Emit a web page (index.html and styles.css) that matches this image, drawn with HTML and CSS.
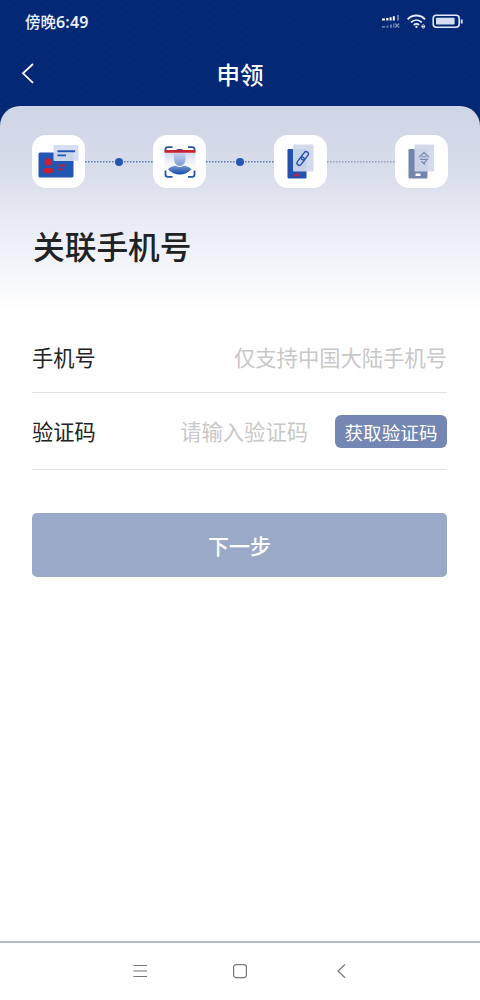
FILE: index.html
```html
<!DOCTYPE html>
<html lang="zh-CN">
<head>
<meta charset="utf-8">
<title>申领</title>
<link rel="stylesheet" href="styles.css">
</head>
<body>
<div class="screen">
  <header class="top">
    <div class="status">
      <span class="time">傍晚<b>6:49</b></span>
      <svg class="status-icons" width="84" height="20" viewBox="0 0 84 20">
        <g fill="#fff">
          <path d="M2 7.600h3v2H2zM6.200 7h2.200v2.600H6.200zM9.600 6.200h2v3.400h-2zM12.800 5.200h2v4.400h-2z"/>
          <path d="M17 4h2v5.600h-2z" opacity=".4"/>
          <path d="M2 15h3v1.800H2zM6.400 14.400h2v2.400h-2zM10 13.600h2v3.200h-2zM13.200 12.600h1.300v4.200h-1.300z" opacity=".4"/>
        </g>
        <path d="M15.200 12.500l4 4M19.200 12.500l-4 4" stroke="#fff" stroke-width="1.200" opacity=".5"/>
        <g fill="none" stroke="#e9eefb" stroke-width="1.900">
          <path d="M27.600 8.300c5-5 12.600-5 17.400 0M31 11.400c3.300-3.100 7.500-3.100 10.800 0M33.800 14c1.600-1.500 3.800-1.500 5.200 0"/>
          <circle cx="36.400" cy="15.900" r="1.100" fill="#e9eefb" stroke="none"/>
          <path d="M41.800 15.400h3c0-2.100-3-2.100-3 0c0 2 2.200 2.200 3 .8" stroke-width="1"/>
        </g>
        <rect x="53.200" y="4.200" width="26" height="12" rx="3.200" fill="none" stroke="#e5eafa" stroke-width="1.600"/>
        <rect x="56" y="6.800" width="18.600" height="6.800" rx=".8" fill="#d6def3"/>
        <path d="M81.700 8.500v4" stroke="#e5eafa" stroke-width="1.800"/>
      </svg>
    </div>
    <div class="nav">
      <svg class="back" width="14" height="22" viewBox="0 0 14 22"><path d="M12 1L2 10.300l10 9.500" fill="none" stroke="#fff" stroke-width="1.800"/></svg>
      <h1>申领</h1>
    </div>
  </header>

  <main class="sheet">
    <div class="steps">
      <div class="tile">
        <svg viewBox="0 0 53 53">
          <rect x="6.500" y="17.500" width="35" height="25" rx="1.500" fill="#2355b2"/>
          <g fill="#cb1f33"><circle cx="16.200" cy="27" r="3.700"/><rect x="11.500" y="33" width="9.500" height="5.300" rx="2.400"/><path d="M25.500 29.500h8v1.900h-8zM25.500 33.400h6v1.900h-6z" opacity=".75"/></g>
          <rect x="21.500" y="10" width="25" height="16" rx="1" fill="#d3dcf0" fill-opacity=".94"/>
          <path d="M25.500 16.300H43M25.500 20.400h8.500" stroke="#2355b2" stroke-width="1.900"/>
        </svg>
      </div>
      <div class="link"><i class="dot"></i></div>
      <div class="tile">
        <svg viewBox="0 0 53 53">
          <defs>
            <linearGradient id="scan" x1="0" y1="0" x2="0" y2="1"><stop offset="0" stop-color="#d8dcf0"/><stop offset="1" stop-color="#fff"/></linearGradient>
            <linearGradient id="head" x1="0" y1="0" x2="0" y2="1"><stop offset="0" stop-color="#c5d2ed"/><stop offset="1" stop-color="#7c9ad2"/></linearGradient>
            <linearGradient id="body" x1="0" y1="0" x2="0" y2="1"><stop offset="0" stop-color="#7796d0"/><stop offset="1" stop-color="#164ba9"/></linearGradient>
          </defs>
          <path d="M11.500 18h31v16h-31z" fill="url(#scan)"/>
          <path d="M15 34.300c2-2.300 5-3.300 8-3.600 2.500 1.600 5 1.600 7.500 0 3 .3 6 1.300 8 3.600-3 3.500-7.500 5.200-11.700 5.200S18 37.800 15 34.300z" fill="url(#body)"/>
          <path d="M21 18h11.500v6c0 4-2.500 7-5.700 7S21 28 21 24z" fill="url(#head)"/>
          <path d="M12.500 16v-1.500c0-1.500.8-2.300 2.300-2.300h4.700M35 12.200h4.200c1.600 0 2.300.8 2.300 2.300V16M12.500 35.500v4c0 1.500.8 2.300 2.300 2.300h4.700M35 41.800h4.200c1.600 0 2.300-.8 2.300-2.300v-4" fill="none" stroke="#2454a2" stroke-width="1.800"/>
          <path d="M23 15c1.500-1.400 6-1.400 7.500 0z" fill="#2454a2"/>
          <path d="M11.500 15h31v2.800h-31z" fill="#c92234"/>
        </svg>
      </div>
      <div class="link"><i class="dot"></i></div>
      <div class="tile">
        <svg viewBox="0 0 53 53">
          <rect x="13.500" y="14" width="19" height="29.500" rx="1.200" fill="#2352ae"/>
          <rect x="20" y="38.500" width="6" height="3" rx="1" fill="#a52b5d"/>
          <rect x="19" y="9.500" width="20.500" height="27" rx="1" fill="#cfd8ed" fill-opacity=".94"/>
          <g fill="none" stroke="#2554aa" stroke-width="1.300" transform="rotate(-53 28.700 23.500)"><rect x="20.700" y="21.200" width="9.200" height="4.600" rx="2.300"/><rect x="27.500" y="21.200" width="9.200" height="4.600" rx="2.300"/></g>
        </svg>
      </div>
      <div class="link link-off"></div>
      <div class="tile">
        <svg viewBox="0 0 53 53">
          <rect x="13.500" y="14" width="19" height="29.500" rx="1.200" fill="#7285ad"/>
          <rect x="20.500" y="38.500" width="5" height="2.500" fill="#fff"/>
          <rect x="19.500" y="9.500" width="19.500" height="27" rx="1" fill="#cfd8eb" fill-opacity=".94"/>
          <path d="M23.800 22.300L29 17.500l5.200 4.800M26.600 21.700h4.800M25 24.400h7.500L29 28M26.500 26.500l3.500 3" fill="none" stroke="#7487ae" stroke-width="1.100"/>
        </svg>
      </div>
    </div>

    <h2>关联手机号</h2>

    <div class="row row-phone">
      <label>手机号</label>
      <span class="hint">仅支持中国大陆手机号</span>
    </div>
    <div class="row row-code">
      <label>验证码</label>
      <span class="hint">请输入验证码</span>
      <button class="get-code">获取验证码</button>
    </div>
    <button class="next">下一步</button>
  </main>

  <footer class="sysbar">
    <svg width="16" height="16" viewBox="0 0 16 16"><path d="M1.500 2.500H15M1.500 8H15M1.500 13.500H15" stroke="#777" stroke-width="1.200"/></svg>
    <svg width="16" height="16" viewBox="0 0 16 16"><rect x="1.600" y="1.600" width="12.800" height="13" rx="2.500" fill="none" stroke="#777" stroke-width="1.200"/></svg>
    <svg width="16" height="16" viewBox="0 0 16 16"><path d="M12 1.500L5 8l7 6.700" fill="none" stroke="#777" stroke-width="1.200"/></svg>
  </footer>
</div>
</body>
</html>
```
FILE: styles.css
```css
* { box-sizing: border-box; }
body { margin: 0; font-family: "Noto Sans CJK SC", sans-serif; color: #202224; }
h1, h2 { margin: 0; }
button { border: 0; padding: 0; font-family: inherit; color: #fff; }
svg { display: block; }

.screen {
  display: flex;
  flex-direction: column;
  width: 480px;
  height: 1000px;
  overflow: hidden;
  background: #fff;
}
.top {
  flex: none;
  height: 126px;
  margin-bottom: -20px;
  color: #fff;
  background: repeating-linear-gradient(140deg, #032773 0, #042977 3px, #032773 6px);
}
.status {
  display: flex;
  justify-content: space-between;
  align-items: center;
  height: 42px;
  padding: 0 16px 0 25px;
}
.time { font-size: 15.500px; font-weight: 500; line-height: 20px; color: #e9f0fc; }
.time b { font-family: "Noto Sans", sans-serif; font-weight: 600; font-size: 16px; letter-spacing: .2px; }
.nav {
  display: grid;
  grid-template-columns: 60px 1fr 60px;
  align-items: center;
  height: 64px;
}
.back { margin-left: 21px; }
h1 { font-size: 23.500px; font-weight: 500; line-height: 34px; text-align: center; }

.sheet {
  flex: 1;
  padding: 29px 33px 0 32px;
  border-radius: 20px 20px 0 0;
  background: linear-gradient(#ced5e5 0, #d9deeb 70px, #e8ebf5 115px, #fff 205px);
}
.steps { display: flex; align-items: center; margin-right: -1px; }
.tile {
  flex: none;
  width: 53px;
  height: 53px;
  border-radius: 14px;
  background: #fff;
}
.link {
  flex: 1;
  display: flex;
  align-items: center;
  justify-content: center;
  height: 9px;
  background: repeating-linear-gradient(90deg, #5378bb 0 1px, transparent 2px 3px) 0 4px / 100% 1.500px no-repeat;
}
.link-off { background-image: repeating-linear-gradient(90deg, #8f9db9 0 1px, transparent 2px 3px); }
.dot { width: 8px; height: 8px; border-radius: 50%; background: #2355b2; }

h2 { margin: 33px 0 0 1px; font-size: 31.700px; font-weight: 500; line-height: 48px; }
.row { display: flex; align-items: center; border-bottom: 1px solid #e4e4e4; font-size: 21.300px; }
.row label { flex: 1; padding-bottom: 1px; font-size: 21.200px; }
.row-phone { height: 72px; margin-top: 52px; }
.row-code { height: 77px; }
.row-code label, .row-code .hint { padding-bottom: 2px; }
.hint { padding-bottom: 1px; color: #c8c8c8; font-weight: 400; }
.get-code {
  width: 112px;
  height: 33px;
  margin-left: 27px;
  border-radius: 6px;
  background: #7486b3;
  font-size: 18.600px;
  line-height: 33px;
}
.next {
  display: block;
  width: 100%;
  height: 64px;
  margin-top: 43px;
  border-radius: 5px;
  background: #9aa9c8;
  font-size: 21px;
  font-weight: 500;
}
.sysbar {
  flex: none;
  display: flex;
  justify-content: center;
  gap: 84.500px;
  height: 59px;
  padding-top: 20px;
  border-top: 2px solid #b4bbc2;
}
```
